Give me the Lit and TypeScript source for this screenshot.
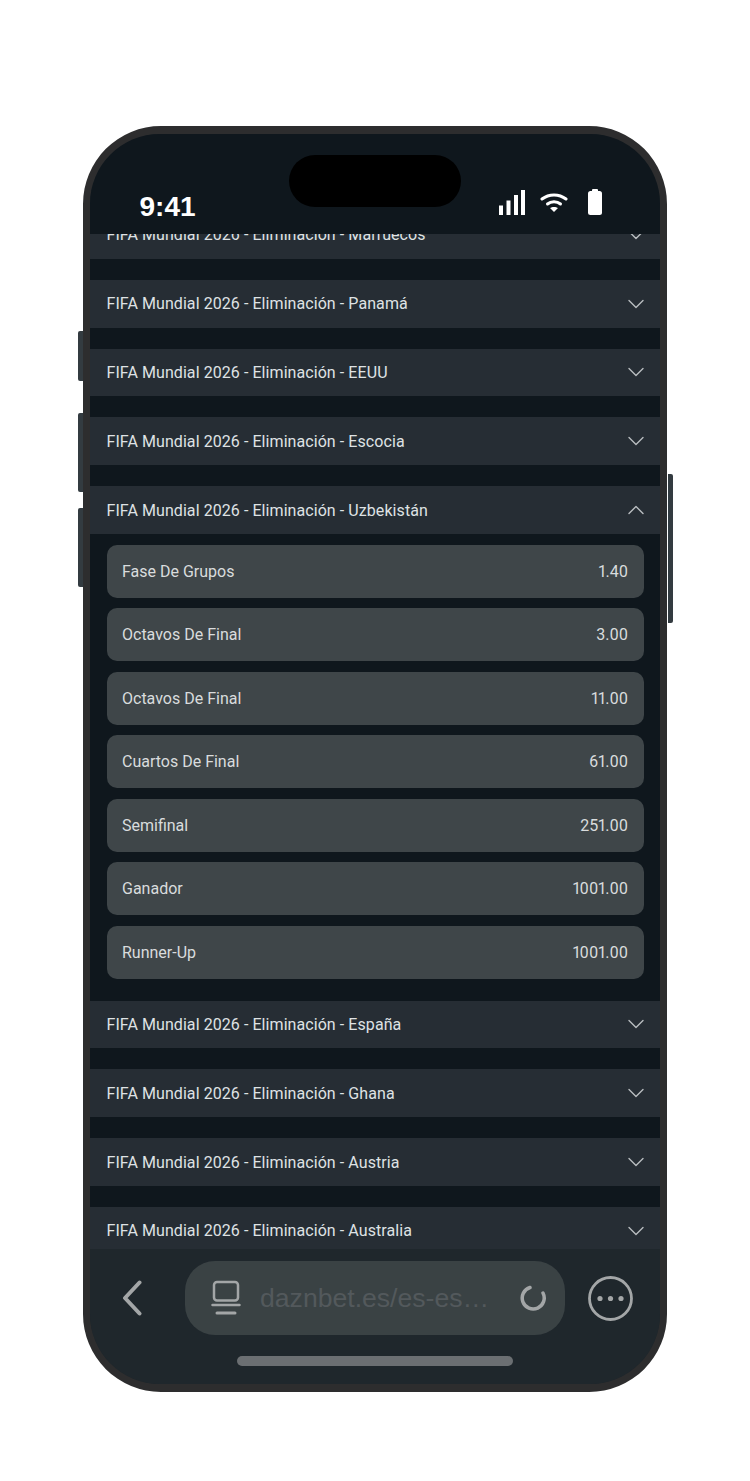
import { LitElement, html, css } from "lit";
import { customElement } from "lit/decorators.js";

const chevron = (up: boolean) => html`<svg class="chev" width="16" height="10" viewBox="0 0 16 10" fill="none" stroke="#b9bdc0" stroke-width="1.4" stroke-linecap="round" stroke-linejoin="round"><path d=${up ? "M1 8.500 8 1.500 15 8.500" : "M1 1.500 8 8.500 15 1.500"}></path></svg>`;

const before = ["Marruecos", "Panamá", "EEUU", "Escocia"];
const after = ["España", "Ghana", "Austria", "Australia"];
const odds: [string, string][] = [
  ["Fase De Grupos", "1.40"],
  ["Octavos De Final", "3.00"],
  ["Octavos De Final", "11.00"],
  ["Cuartos De Final", "61.00"],
  ["Semifinal", "251.00"],
  ["Ganador", "1001.00"],
  ["Runner-Up", "1001.00"],
];

@customElement("app-root")
export class AppRoot extends LitElement {
  static styles = css`
    :host { display: block; width: 750px; height: 1481px; background: #fff; overflow: hidden; font-family: "Roboto", sans-serif; }
    .stage { padding: 126px 83px 0; }
    .phone { position: relative; box-sizing: border-box; width: 584px; height: 1266px; border: solid #2d2d2e; border-width: 8.500px 7.500px; border-radius: 78px; background: #1f272c; display: flex; flex-direction: column; }
    .side { position: absolute; background: #333b40; width: 5px; }
    .l { left: -12.500px; border-radius: 2px 0 0 2px; }
    .r { right: -13px; width: 5.500px; border-radius: 0 2px 2px 0; }
    .b1 { top: 196.500px; height: 50px; }
    .b2 { top: 278.500px; height: 79px; }
    .b3 { top: 373.500px; height: 79px; }
    .b4 { top: 339.500px; height: 149px; }
    .screen { flex: 1; min-height: 0; display: flex; flex-direction: column; overflow: hidden; border-radius: 70px; }
    .status { height: 99.500px; flex: none; background: #0f171d; position: relative; display: flex; align-items: flex-end; justify-content: space-between; padding: 0 58px 12px 49.500px; box-sizing: border-box; z-index: 1; }
    .island { position: absolute; left: 199px; top: 20.500px; width: 172px; height: 52px; border-radius: 26px; background: #000; }
    .time { font: 700 28px/30px "Liberation Sans", sans-serif; color: #fff; }
    .icons { display: flex; align-items: flex-end; padding-bottom: 7px; }
    .wifi { margin: 0 20px 3px 15px; }
    .list { flex: 1; min-height: 0; overflow: hidden; background: #0f171d; }
    .inner { margin-top: -22.500px; }
    .group + .group { margin-top: 21px; }
    .head { height: 47.800px; background: #262d34; display: flex; align-items: center; justify-content: space-between; padding: 0 16.500px; color: #dfe2e4; font-size: 16px; letter-spacing: 0.07px; }
    .panel { padding: 11px 16.500px 21.600px; display: flex; flex-direction: column; gap: 10.500px; }
    .item { height: 53px; border-radius: 10px; background: #3f4649; display: flex; align-items: center; justify-content: space-between; padding: 0 15.500px; color: #d9dcdd; font-size: 16px; font-variant-numeric: proportional-nums; }
    .group.open + .group { margin-top: 0; }
    .bar { flex: none; height: 135px; background: #1f272c; }
    .barRow { display: flex; align-items: center; padding: 12px 27px 0 32px; }
    .back { width: 63px; flex: none; display: flex; }
    .pill { width: 380px; height: 74px; border-radius: 30px; background: #3a4244; flex: none; display: flex; align-items: center; padding: 0 18.500px 0 26px; box-sizing: border-box; }
    .url { font: 26.600px "Liberation Sans", sans-serif; color: #53595c; margin: 0 0 0 19px; flex: 1; white-space: nowrap; }
    .more { margin-left: 23px; display: flex; }
    .home { width: 276px; height: 10px; border-radius: 5px; background: #6b6f72; margin: 21px auto 0; }
  `;

  head(name: string, up = false) {
    return html`<div class="head"><span>FIFA Mundial 2026 - Eliminación - ${name}</span>${chevron(up)}</div>`;
  }

  render() {
    return html`<div class="stage"><div class="phone">
      <div class="side l b1"></div><div class="side l b2"></div><div class="side l b3"></div><div class="side r b4"></div>
      <div class="screen">
        <div class="status">
          <div class="island"></div>
          <div class="time">9:41</div>
          <div class="icons">
            <svg width="26" height="25" viewBox="0 0 26 25" fill="#fff"><rect x="0" y="15.500" width="4" height="9.500"/><rect x="7.500" y="10.500" width="4" height="14.500"/><rect x="15" y="5" width="4" height="20"/><rect x="22" y="0" width="4" height="25"/></svg>
            <svg class="wifi" width="28" height="19" viewBox="0 0 28 19" fill="none" stroke="#fff" stroke-width="3" stroke-linecap="round"><path d="M2 6C9 0.500 19 0.500 26 6"/><path d="M7.500 11C11 8 17 8 20.500 11"/><path d="M14 19 10 15C12 13.500 16 13.500 18 15Z" fill="#fff" stroke="none"/></svg>
            <svg width="14" height="26" viewBox="0 0 14 26" fill="#fff"><rect x="4" y="0" width="6" height="3" rx="1"/><rect x="0" y="2" width="14" height="24" rx="2.500"/></svg>
          </div>
        </div>
        <div class="list"><div class="inner">
          ${before.map((n) => html`<div class="group">${this.head(n)}</div>`)}
          <div class="group open">${this.head("Uzbekistán", true)}
            <div class="panel">${odds.map(([a, b]) => html`<div class="item"><span>${a}</span><span>${b}</span></div>`)}</div>
          </div>
          ${after.map((n) => html`<div class="group">${this.head(n)}</div>`)}
        </div></div>
        <div class="bar">
          <div class="barRow">
            <div class="back"><svg width="20" height="36" viewBox="0 0 20 36" fill="none" stroke="#a3a6a7" stroke-width="4" stroke-linecap="round" stroke-linejoin="round"><path d="M17.500 2.500 3 18 17.500 33.500"/></svg></div>
            <div class="pill">
              <svg width="30" height="36" viewBox="0 0 30 36" fill="none" stroke="#a3a6a7" stroke-width="2.500" stroke-linecap="round"><rect x="3" y="2" width="24" height="18.500" rx="3"/><path d="M1.500 25H28.500"/><path d="M6 33H24" stroke-width="3"/></svg>
              <div class="url">daznbet.es/es-es…</div>
              <svg width="28" height="28" viewBox="0 0 28 28" fill="none" stroke="#a3a6a7" stroke-width="3.500" stroke-linecap="round"><path d="M11 3.500A11 11 0 1 0 24 9"/></svg>
            </div>
            <div class="more"><svg width="45" height="45" viewBox="0 0 45 45" fill="none"><circle cx="22.500" cy="22.500" r="21" stroke="#a3a6a7" stroke-width="2.800"/><circle cx="12" cy="22.500" r="2.600" fill="#a3a6a7"/><circle cx="22.500" cy="22.500" r="2.600" fill="#a3a6a7"/><circle cx="33" cy="22.500" r="2.600" fill="#a3a6a7"/></svg></div>
          </div>
          <div class="home"></div>
        </div>
      </div>
    </div></div>`;
  }
}
